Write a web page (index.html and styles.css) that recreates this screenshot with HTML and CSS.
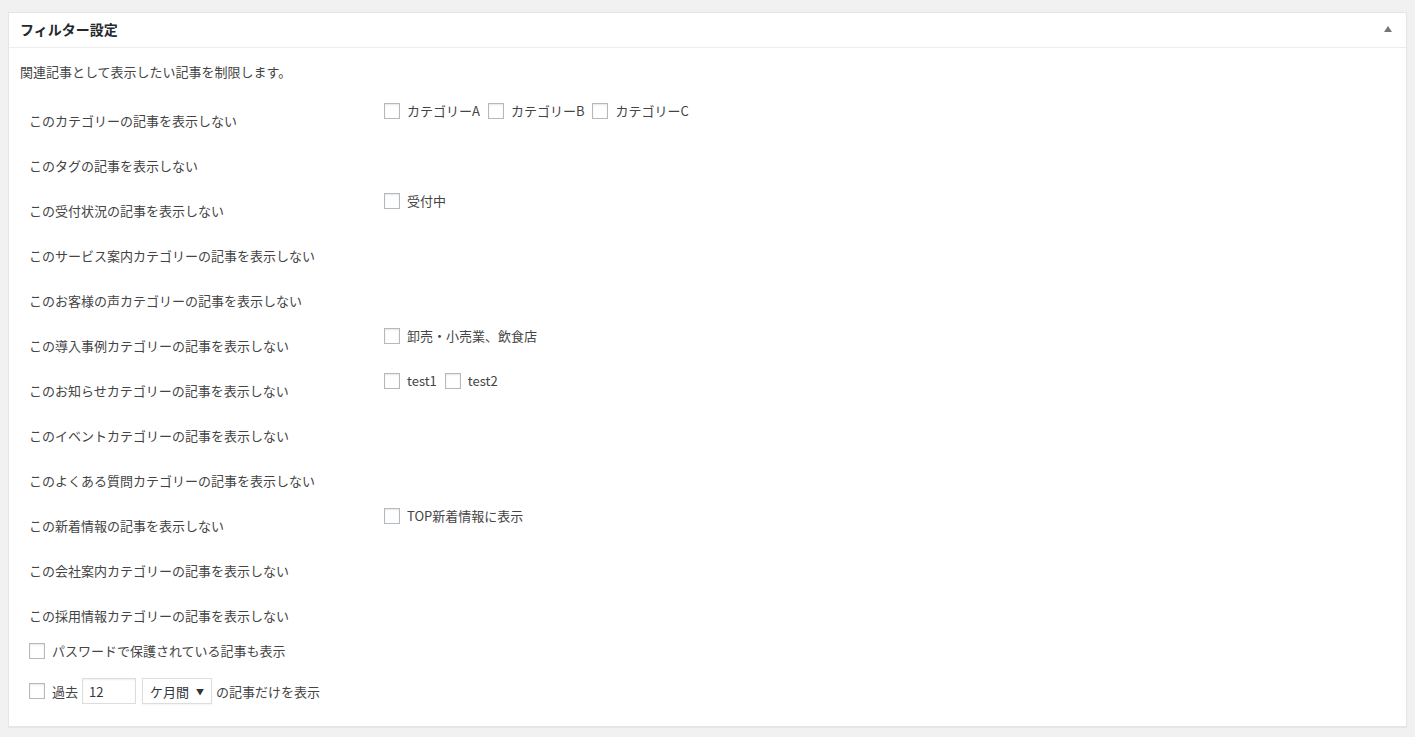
FILE: index.html
```html
<!DOCTYPE html>
<html lang="ja">
<head>
<meta charset="utf-8">
<title>フィルター設定</title>
<link rel="stylesheet" href="styles.css">
</head>
<body>
<div class="panel">
  <div class="panel-head">
    <h2 class="panel-title">フィルター設定</h2>
    <span class="toggle"></span>
  </div>
  <div class="panel-body">
    <p class="desc">関連記事として表示したい記事を制限します。</p>
    <div class="rows">
      <div class="row"><div class="label">このカテゴリーの記事を表示しない</div><div class="value">
        <label class="opt"><input type="checkbox"><span>カテゴリーA</span></label>
        <label class="opt"><input type="checkbox"><span>カテゴリーB</span></label>
        <label class="opt"><input type="checkbox"><span>カテゴリーC</span></label>
      </div></div>
      <div class="row"><div class="label">このタグの記事を表示しない</div><div class="value"></div></div>
      <div class="row"><div class="label">この受付状況の記事を表示しない</div><div class="value">
        <label class="opt"><input type="checkbox"><span>受付中</span></label>
      </div></div>
      <div class="row"><div class="label">このサービス案内カテゴリーの記事を表示しない</div><div class="value"></div></div>
      <div class="row"><div class="label">このお客様の声カテゴリーの記事を表示しない</div><div class="value"></div></div>
      <div class="row"><div class="label">この導入事例カテゴリーの記事を表示しない</div><div class="value">
        <label class="opt"><input type="checkbox"><span>卸売・小売業、飲食店</span></label>
      </div></div>
      <div class="row"><div class="label">このお知らせカテゴリーの記事を表示しない</div><div class="value">
        <label class="opt"><input type="checkbox"><span>test1</span></label>
        <label class="opt"><input type="checkbox"><span>test2</span></label>
      </div></div>
      <div class="row"><div class="label">このイベントカテゴリーの記事を表示しない</div><div class="value"></div></div>
      <div class="row"><div class="label">このよくある質問カテゴリーの記事を表示しない</div><div class="value"></div></div>
      <div class="row"><div class="label">この新着情報の記事を表示しない</div><div class="value">
        <label class="opt"><input type="checkbox"><span>TOP新着情報に表示</span></label>
      </div></div>
      <div class="row"><div class="label">この会社案内カテゴリーの記事を表示しない</div><div class="value"></div></div>
      <div class="row"><div class="label">この採用情報カテゴリーの記事を表示しない</div><div class="value"></div></div>
    </div>
    <div class="extra">
      <label class="opt line"><input type="checkbox"><span>パスワードで保護されている記事も表示</span></label>
      <div class="period">
        <input type="checkbox">
        <span class="word">過去</span>
        <input class="num" type="text" value="12">
        <div class="select"><span>ケ月間</span><span class="caret">▼</span></div>
        <span>の記事だけを表示</span>
      </div>
    </div>
  </div>
</div>
</body>
</html>
```

FILE: styles.css
```css
* { box-sizing: border-box; }
html, body { margin: 0; padding: 0; }
body {
  background: #f1f1f1;
  font-family: "Noto Sans CJK JP", "Noto Sans", sans-serif;
  font-size: 13px;
  color: #444;
  height: 737px;
  overflow: hidden;
}
.panel {
  margin: 12px 8px 0 8px;
  height: 715px;
  background: #fff;
  border: 1px solid #e5e5e5;
  box-shadow: 0 1px 1px rgba(0,0,0,0.04);
}
.panel-head {
  height: 35px;
  border-bottom: 1px solid #eee;
  display: flex;
  align-items: center;
  justify-content: space-between;
  padding: 0 14px 2px 11px;
}
.panel-title {
  margin: 0;
  font-size: 14px;
  font-weight: 700;
  color: #23282d;
  line-height: 20px;
}
.toggle {
  width: 0;
  height: 0;
  border-left: 4px solid transparent;
  border-right: 4px solid transparent;
  border-bottom: 6px solid #72777c;
  margin-top: -1px;
}
.panel-body {
  padding: 0 12px 12px 11px;
}
.desc {
  margin: 14px 0 17px 0;
  line-height: 20px;
}
.rows { display: flex; flex-direction: column; }
.row {
  display: grid;
  grid-template-columns: 364px 1fr;
  height: 45px;
}
.label {
  padding-left: 9px;
  padding-bottom: 2px;
  align-self: center;
  line-height: 20px;
}
.value {
  padding-top: 4px;
  display: flex;
  align-items: flex-start;
  gap: 8px;
}
.opt {
  display: flex;
  align-items: center;
  gap: 7px;
  line-height: 16px;
}
input[type="checkbox"] {
  appearance: none;
  -webkit-appearance: none;
  margin: 0;
  width: 16px;
  height: 16px;
  border: 1px solid #b4b9be;
  background: #fff;
  box-shadow: inset 0 1px 2px rgba(0,0,0,0.1);
  flex: none;
}
.extra {
  padding-left: 9px;
  padding-top: 4px;
  display: flex;
  flex-direction: column;
  gap: 19px;
}
.line { height: 16px; }
.period {
  display: flex;
  align-items: center;
}
.period .word { margin-left: 7px; margin-right: 4px; }
.num {
  width: 54px;
  height: 26px;
  border: 1px solid #ddd;
  box-shadow: inset 0 1px 2px rgba(0,0,0,0.07);
  font: inherit;
  color: #32373c;
  padding: 0 6px;
  margin: 0 6px 0 0;
  outline: none;
}
.select {
  width: 70px;
  height: 26px;
  border: 1px solid #ddd;
  box-shadow: 0 1px 2px rgba(0,0,0,0.05);
  display: flex;
  align-items: center;
  justify-content: space-between;
  padding: 0 7px 0 7px;
  color: #32373c;
  margin-right: 4px;
}
.caret { font-size: 8px; color: #333; }
```
